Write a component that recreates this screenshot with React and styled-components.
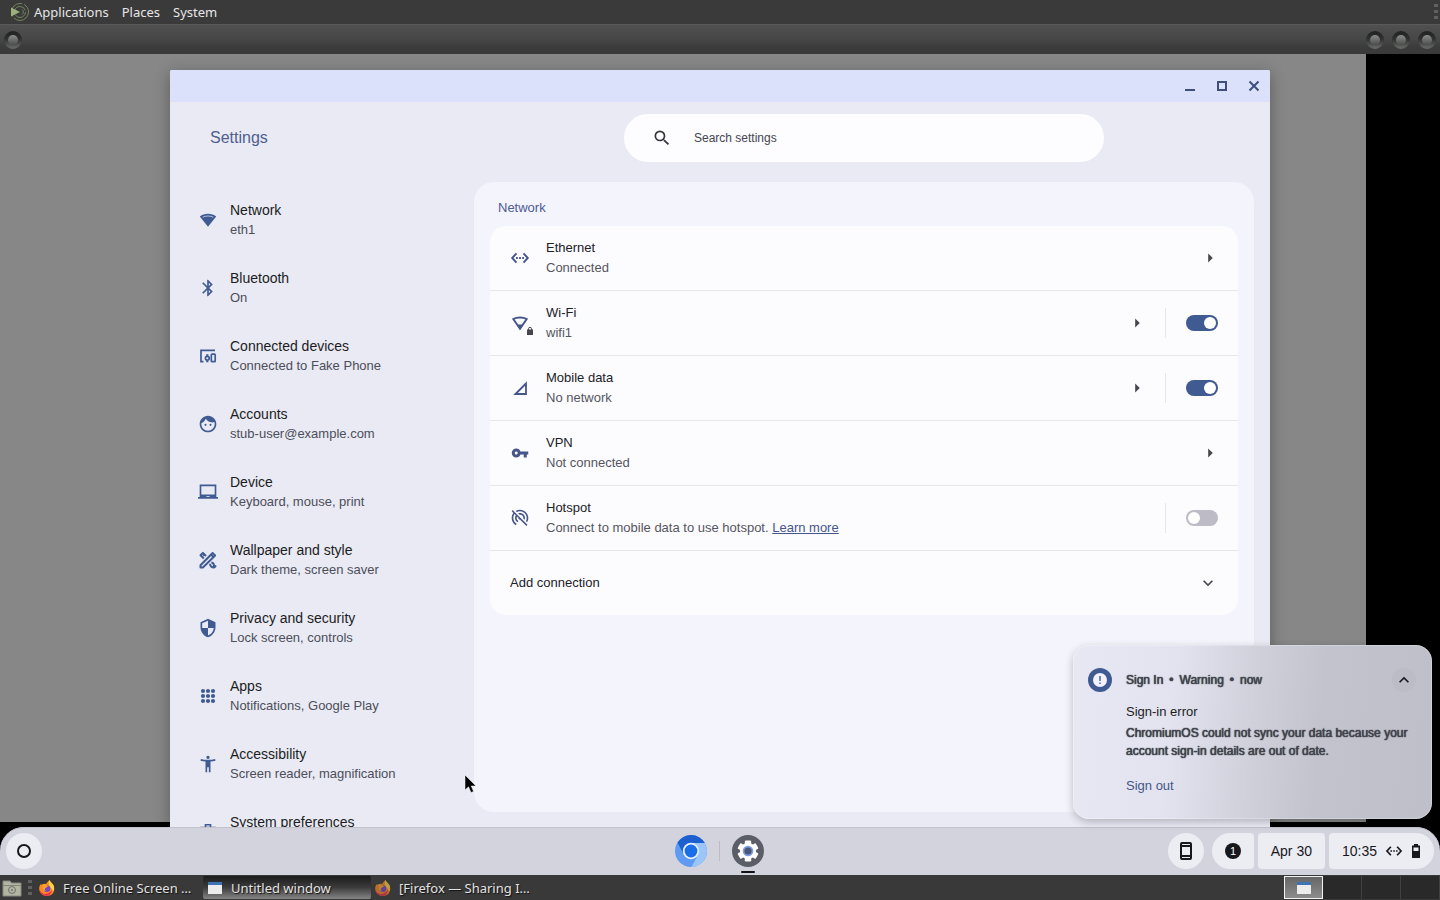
import React, { useState } from "react";
import styled, { createGlobalStyle } from "styled-components";
import {
  MdBluetooth,
  MdFace,
  MdLaptopChromebook,
  MdSecurity,
  MdAccessibilityNew,
  MdVpnKey,
  MdPortableWifiOff,
  MdSearch,
  MdArrowRight,
  MdKeyboardArrowDown,
  MdKeyboardArrowUp,
} from "react-icons/md";

const GlobalStyle = createGlobalStyle`
  * {
    box-sizing: border-box;
  }
  :root {
    --color-primary: #405a92;
    --color-text: #1b1c22;
    --color-text-soft: #4c4e59;
    --color-line: #e6e6eb;
  }
  body {
    margin: 0;
    background: #000;
    font-family: "Liberation Sans", Arial, sans-serif;
    font-size: 13px;
    line-height: 20px;
    color: var(--color-text);
  }
  button {
    border: none;
    background: none;
    padding: 0;
    font: inherit;
    color: inherit;
  }
  a {
    color: inherit;
    text-decoration: none;
  }
  svg {
    display: block;
    flex-shrink: 0;
  }
`;

const Screen = styled.div`
  height: 100vh;
  display: flex;
  flex-direction: column;
  overflow: hidden;
`;

/* ---------- host panels ---------- */

const TopPanel = styled.header`
  display: flex;
  align-items: center;
  height: 24px;
  padding: 0 2px 0 8px;
  background: #3a3a3b;
  color: #e6e6e6;
  font-family: "Noto Sans", sans-serif;
`;

const PanelMenu = styled.nav`
  display: flex;
  flex: 1;
  gap: 13px;
  margin-left: 4px;
`;

const HostTitleBar = styled.div`
  display: flex;
  align-items: center;
  justify-content: space-between;
  height: 30px;
  padding: 0 4px;
  border-top: 1px solid #5a5a5a;
  background: linear-gradient(#505051, #464647 50%, #3b3b3b 75%, #3a3a3a);
`;

const HostButtons = styled.div`
  display: flex;
  gap: 8px;
`;

const RingButton = styled.button`
  width: 18px;
  height: 18px;
  border-radius: 50%;
  border: 4px solid transparent;
  background:
    linear-gradient(#8c8c8c, #4c4c4c) padding-box,
    linear-gradient(#1f2020, #303131 45%, #6a6e6a) border-box;
`;

const Handle = styled.span`
  width: 4px;
  height: 16px;
  background: repeating-linear-gradient(#606062 0 3px, transparent 3px 6px);
`;

const BottomPanel = styled.footer`
  display: flex;
  align-items: stretch;
  height: 25px;
  background: #39393a;
  color: #e2e2e2;
  font-family: "Noto Sans", sans-serif;
`;

const PanelLauncher = styled.button`
  display: flex;
  align-items: center;
  padding: 0 6px 0 2px;
`;

const Tasks = styled.div`
  display: flex;
  flex: 1;
  align-items: center;
`;

const TaskHandle = styled(Handle)`
  margin-right: 3px;
`;

const Task = styled.button`
  display: flex;
  align-items: center;
  gap: 8px;
  width: 168px;
  height: 23px;
  padding: 0 4px;
  white-space: nowrap;
  text-shadow: 1px 1px 1px #111;
  border-radius: 2px;
  background: ${({ $active }) =>
    $active ? "linear-gradient(#1b1b1b, #3c3c3c 50%, #858585)" : "none"};

  svg {
    opacity: ${({ $dim }) => ($dim ? 0.65 : 1)};
  }
`;

const Workspaces = styled.div`
  display: grid;
  grid-template-columns: repeat(4, 39px);
  margin: 1px 0;
  background: #29292a;
`;

const Workspace = styled.button`
  display: flex;
  align-items: center;
  justify-content: center;
  border: ${({ $active }) => ($active ? "1px solid #f2f2f2" : "none")};
  border-right: 1px solid ${({ $active }) => ($active ? "#f2f2f2" : "#414142")};
  background: ${({ $active }) =>
    $active ? "linear-gradient(#666, #8c8c8c)" : "none"};
`;

/* ---------- desktop ---------- */

const Desktop = styled.main`
  position: relative;
  display: flex;
  flex-direction: column;
  flex: 1;
  min-height: 0;
  background: #000;
`;

const Wallpaper = styled.div`
  flex: 1;
  margin: 0 74px 5px 0;
  background: #878787;
`;

const SettingsWindow = styled.section`
  position: absolute;
  top: 16px;
  left: 170px;
  right: 170px;
  bottom: 48px;
  display: flex;
  flex-direction: column;
  overflow: hidden;
  border-radius: 2px 2px 0 0;
  background: #e9eaf4;
  box-shadow: 0 4px 16px rgba(0, 0, 0, 0.32);
`;

const TitleBar = styled.div`
  display: flex;
  justify-content: flex-end;
  flex-shrink: 0;
  height: 32px;
  background: #dbe1fa;
`;

const WindowButton = styled.button`
  display: flex;
  align-items: center;
  justify-content: center;
  width: 32px;
  color: #3f4f7b;
`;

const AppHeader = styled.div`
  display: grid;
  grid-template-columns: 304px 1fr;
  align-items: center;
  flex-shrink: 0;
  height: 80px;
  padding: 0 16px 8px 0;
`;

const AppTitle = styled.h1`
  margin: 0 0 0 40px;
  font-size: 16px;
  font-weight: 400;
  color: #4d5f8f;
`;

const SearchBox = styled.label`
  display: flex;
  align-items: center;
  gap: 22px;
  width: 100%;
  max-width: 480px;
  height: 48px;
  margin: 0 auto;
  padding: 0 28px;
  border-radius: 24px;
  background: #fdfcff;
  color: #33343b;

  input {
    flex: 1;
    border: none;
    outline: none;
    background: none;
    font: inherit;
    font-size: 12px;
    padding: 0;
  }
  input::placeholder {
    color: #44464f;
    opacity: 1;
  }
`;

const AppBody = styled.div`
  display: grid;
  grid-template-columns: 304px 1fr;
  flex: 1;
  min-height: 0;
  padding: 0 16px 15px 0;
`;

const SideNav = styled.nav`
  padding: 4px 0 0 28px;
  min-height: 0;
`;

const SideItem = styled.a`
  display: flex;
  align-items: center;
  gap: 12px;
  height: 68px;
  color: var(--color-primary);
`;

const SideTitle = styled.div`
  font-size: 14px;
  color: var(--color-text);
`;

const SideText = styled.div`
  min-height: 20px;
  color: var(--color-text-soft);
`;

const ContentPanel = styled.section`
  padding: 16px 16px;
  border-radius: 20px;
  background: #f4f4fd;
`;

const SectionTitle = styled.h2`
  margin: 0 8px 8px;
  font-size: 13px;
  font-weight: 400;
  color: #4c5c94;
`;

const Card = styled.div`
  border-radius: 16px;
  background: #fcfbfe;
`;

const Row = styled.div`
  display: flex;
  align-items: center;
  gap: 20px;
  height: 65px;
  padding: 0 20px;
  color: #45568a;
  border-bottom: 1px solid var(--color-line);

  &:last-child {
    height: 64px;
    border-bottom: none;
  }
`;

const RowMain = styled.div`
  display: flex;
  align-items: center;
  flex: 1;
  gap: 16px;
`;

const RowIcon = styled.span`
  display: flex;
  align-items: center;
  justify-content: center;
  width: 20px;
  height: 20px;
`;

const RowTitle = styled.div`
  color: #202126;
`;

const RowText = styled.div`
  color: #55565e;

  a {
    color: #45568a;
    text-decoration: underline;
  }
`;

const ArrowButton = styled.button`
  display: flex;
  align-items: center;
  justify-content: center;
  width: ${({ $wide }) => ($wide ? "20px" : "16px")};
  height: 16px;
  color: #46474e;
`;

const Divider = styled.span`
  width: 1px;
  height: 30px;
  background: var(--color-line);
`;

const Switch = styled.input`
  appearance: none;
  display: flex;
  align-items: center;
  width: 32px;
  height: 16px;
  margin: 0;
  padding: 0 2px;
  border-radius: 8px;
  background: #bcbbc6;

  &::before {
    content: "";
    width: 12px;
    height: 12px;
    border-radius: 50%;
    background: #fff;
  }
  &:checked {
    justify-content: flex-end;
    background: var(--color-primary);
  }
`;

/* ---------- shelf ---------- */

const Shelf = styled.div`
  position: relative;
  display: grid;
  grid-template-columns: 1fr auto 1fr;
  align-items: center;
  height: 48px;
  padding: 0 6px;
  border-radius: 24px 24px 0 0;
  background: #d3d3de;
  box-shadow: inset 0 1px 0 #c3c3cd;
`;

const ShelfApps = styled.div`
  display: flex;
  align-items: center;
  gap: 12px;
  margin-right: 2px;
`;

const ShelfApp = styled.button`
  position: relative;

  &::after {
    content: "";
    display: ${({ $running }) => ($running ? "block" : "none")};
    position: absolute;
    left: 9px;
    top: 36px;
    width: 14px;
    height: 2px;
    border-radius: 1px;
    background: #111;
  }
`;

const ShelfDivider = styled.span`
  width: 1px;
  height: 20px;
  background: #bcbcc7;
`;

const Tray = styled.div`
  display: flex;
  justify-content: flex-end;
  gap: 4px;
`;

const Pill = styled.button`
  display: flex;
  align-items: center;
  justify-content: center;
  gap: 8px;
  height: 36px;
  padding: 0 13px;
  border-radius: ${({ $shape }) => $shape || "4px"};
  background: #ececf3;
  font-size: 14px;
  color: #17181c;
`;

const RoundPill = styled(Pill)`
  width: 36px;
  padding: 0;
  border-radius: 50%;
  margin-right: ${({ $spaced }) => ($spaced ? "4px" : "0")};
`;

/* ---------- notification ---------- */

const Notification = styled.aside`
  position: absolute;
  right: 8px;
  bottom: 56px;
  display: grid;
  grid-template-columns: 24px 1fr;
  column-gap: 14px;
  width: 359px;
  padding: 23px 16px 23px 15px;
  border-radius: 16px;
  background: linear-gradient(
    95deg,
    #e7e8f3 0%,
    #e2e3ee 28%,
    #cfd0da 50%,
    #c3c3cd 68%,
    #bfbfca 100%
  );
  box-shadow:
    inset 0 0 0 1px rgba(255, 255, 255, 0.25),
    0 3px 8px rgba(0, 0, 0, 0.24);
`;

const NoticeHead = styled.div`
  display: flex;
  align-items: center;
  justify-content: space-between;
  height: 24px;
  font-size: 12px;
  color: #41434c;
  text-shadow: 0 0 1px #41434c, 0 0 1px #41434c;
`;

const NoticeMeta = styled.div`
  display: flex;
  gap: 6px;
`;

const CollapseButton = styled.button`
  display: flex;
  align-items: center;
  justify-content: center;
  width: 24px;
  height: 24px;
  border-radius: 50%;
  background: #bcbcc6;
  color: #17181c;
`;

const NoticeTitle = styled.div`
  margin-top: 10px;
`;

const NoticeText = styled.p`
  margin: 2px 0 16px;
  font-size: 12px;
  line-height: 18px;
  color: #41434c;
  text-shadow: 0 0 1px #41434c, 0 0 1px #41434c;
`;

const NoticeAction = styled.button`
  display: block;
  color: #45568a;
`;

const Pointer = styled.svg`
  position: absolute;
  left: 464px;
  top: 720px;
`;

/* ---------- drawings ---------- */

const WifiIcon = () => (
  <svg width="20" height="20" viewBox="0 0 20 20" fill="currentColor">
    <path d="M10 3.800C6.900 3.800 4.100 4.800 1.800 6.500L10 16.700L18.200 6.500C15.900 4.800 13.100 3.800 10 3.800Z" />
    <path d="M4.800 7.200C6.300 6.400 8 6 10 6s3.700.4 5.200 1.200" fill="none" stroke="#e9eaf4" strokeWidth="0.700" />
  </svg>
);

const EthernetIcon = ({ size = 20 }) => (
  <svg width={size} height={size} viewBox="0 0 20 20" fill="none" stroke="currentColor" strokeWidth="1.900">
    <path d="M6.500 5.300L2.200 10l4.300 4.700M13.500 5.300l4.300 4.700-4.300 4.700" />
    <path d="M6 10h1.800M9.100 10h1.800M12.200 10H14" />
  </svg>
);

const DevicesIcon = () => (
  <svg width="20" height="20" viewBox="0 0 20 20" fill="none" stroke="currentColor" strokeWidth="1.700">
    <path d="M17 4.300H3v11.400h2.500" />
    <rect x="13.300" y="8.200" width="3.900" height="7.500" rx="0.800" />
    <circle cx="9.300" cy="12.200" r="1.900" />
    <path d="M8.200 9.200h2.200M8.200 15.400h2.200" />
  </svg>
);

const StyleIcon = () => (
  <svg width="20" height="20" viewBox="0 0 20 20" fill="none" stroke="currentColor" strokeWidth="2" strokeLinejoin="round">
    <path d="M2.500 17.500v-2.300L14.600 3l2.500 2.500L4.900 17.500Z" />
    <path d="M13 4.600l2.500 2.500" />
    <path d="M8 6L4.900 2.900 2.500 5.300l3.300 3.100M5.200 5.800l1.400-1.400" />
    <path d="M12 13.800c.1 2.200 1.500 3.800 4.300 3.600l1.200-1.200-1.600-.5c.2-2-.7-2.900-2.500-3.200" />
  </svg>
);

const AppsIcon = () => (
  <svg width="20" height="20" viewBox="0 0 20 20" fill="currentColor">
    {[5, 10, 15].map((y) =>
      [5, 10, 15].map((x) => <circle key={x + "-" + y} cx={x} cy={y} r="2.100" />)
    )}
  </svg>
);

const SystemIcon = () => (
  <svg width="20" height="20" viewBox="0 0 20 20" fill="none" stroke="currentColor" strokeWidth="1.600">
    <path d="M7.500 5.500V2.800h5v2.700M3 5.500h14v11H3z" />
  </svg>
);

const WifiLockIcon = () => (
  <svg width="20" height="20" viewBox="0 0 20 20" overflow="visible">
    <path d="M10 15.800L3.300 6C5.200 4.900 7.500 4.500 10 4.500s4.800.4 6.700 1.500Z" fill="none" stroke="currentColor" strokeWidth="1.900" />
    <path d="M6.800 11.500h6.400L10 16Z" fill="currentColor" />
    <path d="M17 16.500h6V22h-6z" fill="#46474e" />
    <path d="M18.500 17v-1.200a1.500 1.500 0 0 1 3 0V17" fill="none" stroke="#46474e" />
  </svg>
);

const SignalIcon = () => (
  <svg width="20" height="20" viewBox="0 0 20 20" fill="none" stroke="currentColor" strokeWidth="1.800">
    <path d="M5.500 16L16 5.500V16Z" />
  </svg>
);

const MenuLogo = () => (
  <svg width="22" height="20" viewBox="0 0 22 20" fill="none">
    <circle cx="12" cy="10" r="8.500" stroke="#75845c" strokeDasharray="20 2" />
    <circle cx="12" cy="10" r="5.500" stroke="#75845c" strokeDasharray="14 4" />
    <path d="M3 5.500L12 10l-9 4.500Z" fill="#9bb07a" />
    <path d="M14 7.500a3 3 0 0 1 0 5" stroke="#75845c" />
  </svg>
);

const ChromiumIcon = () => (
  <svg width="32" height="32" viewBox="0 0 32 32">
    <circle cx="16" cy="16" r="16" fill="#5f9bf3" />
    <path d="M2.500 7.500A16 16 0 0 1 29.800 8H16a8 8 0 0 0-7.200 11.500Z" fill="#1e5fd0" />
    <path d="M29.800 8A16 16 0 0 1 16.500 32l6.500-12a8 8 0 0 0-7-12Z" fill="#9cc6fb" />
    <circle cx="16" cy="16" r="8.200" fill="#e8f1fd" />
    <circle cx="16" cy="16" r="6.400" fill="#1a6fe8" />
  </svg>
);

const GearIcon = () => (
  <svg width="32" height="32" viewBox="0 0 32 32">
    <circle cx="16" cy="16" r="16" fill="#5b5e66" />
    <g fill="#fff">
      {[0, 60, 120].map((a) => (
        <rect key={a} x="12.800" y="5.500" width="6.400" height="21" rx="1.200" transform={`rotate(${a} 16 16)`} />
      ))}
      <circle cx="16" cy="16" r="8" />
    </g>
    <circle cx="16" cy="16" r="5.300" fill="#7d9de6" />
    <circle cx="16" cy="16" r="3.600" fill="#4b5777" />
  </svg>
);

const PhoneIcon = () => (
  <svg width="20" height="20" viewBox="0 0 20 20" fill="none" stroke="currentColor" strokeWidth="2">
    <rect x="5" y="2" width="10" height="16" rx="1" />
    <path d="M5 5h10M5 15h10" />
  </svg>
);

const BatteryIcon = () => (
  <svg width="10" height="16" viewBox="0 0 10 16">
    <path d="M3 1h4v1.500h2V15H1V2.500h2Z" fill="currentColor" />
    <path d="M2.500 4.500h5v3.500h-5z" fill="#ececf3" />
  </svg>
);

const FolderIcon = () => (
  <svg width="20" height="18" viewBox="0 0 20 18">
    <path d="M1 2h7l1.500 2H19v13H1Z" fill="#b3b5a4" stroke="#85877a" />
    <path d="M1 6.500h18" stroke="#85877a" />
    <circle cx="10" cy="11" r="3.500" fill="none" stroke="#6f7167" />
    <circle cx="10" cy="11" r="1" fill="#6f7167" />
  </svg>
);

const FirefoxIcon = () => (
  <svg width="16" height="16" viewBox="0 0 16 16">
    <path d="M10.500 0c.5 2 2.700 3 4 5.200 2 4.300.3 10.600-6.500 10.800C3.500 16 .2 12.800.2 8.800c0-2 .6-3.600 1.700-4.800l.8 1.100C4 4 5.600 3.600 7 4c1-1.200 2-2.700 3.500-4Z" fill="#ff8a1e" />
    <path d="M10.500 0c.5 2 2.700 3 4 5.200.8 2 .8 4-.2 6L10 5c-.5-1.800-.3-3.500.5-5Z" fill="#ffd545" />
    <path d="M.3 8C1 13 5 15 8.500 13.500c2-.7 3.500-2 4.500-3.500-.5 4-3 6-5.600 6C3.500 15.800.3 13 .3 8Z" fill="#ee3150" />
    <circle cx="8" cy="8.700" r="3.300" fill="#7747c9" />
    <path d="M2.500 5C4 4 5.600 3.800 7.300 5.300L9 6.600 6.400 8c-.9 1-.5 2.400.6 3C4.500 11 3.500 8.600 4.300 7Z" fill="#ffa52c" />
  </svg>
);

const WindowIcon = () => (
  <svg width="16" height="16" viewBox="0 0 16 16">
    <path d="M1 2h14v12H1z" fill="#ececec" />
    <path d="M1 2h14v3H1z" fill="#3d74b4" />
  </svg>
);

/* ---------- data ---------- */

const menus = ["Applications", "Places", "System"];

const sections = [
  { title: "Network", text: "eth1", icon: <WifiIcon /> },
  { title: "Bluetooth", text: "On", icon: <MdBluetooth size={20} /> },
  { title: "Connected devices", text: "Connected to Fake Phone", icon: <DevicesIcon /> },
  { title: "Accounts", text: "stub-user@example.com", icon: <MdFace size={20} /> },
  { title: "Device", text: "Keyboard, mouse, print", icon: <MdLaptopChromebook size={20} /> },
  { title: "Wallpaper and style", text: "Dark theme, screen saver", icon: <StyleIcon /> },
  { title: "Privacy and security", text: "Lock screen, controls", icon: <MdSecurity size={20} /> },
  { title: "Apps", text: "Notifications, Google Play", icon: <AppsIcon /> },
  { title: "Accessibility", text: "Screen reader, magnification", icon: <MdAccessibilityNew size={20} /> },
  { title: "System preferences", text: "", icon: <SystemIcon /> },
];

const connections = [
  { name: "Ethernet", text: "Connected", icon: <EthernetIcon />, arrow: true },
  { name: "Wi-Fi", text: "wifi1", icon: <WifiLockIcon />, arrow: true, toggle: true },
  { name: "Mobile data", text: "No network", icon: <SignalIcon />, arrow: true, toggle: true },
  { name: "VPN", text: "Not connected", icon: <MdVpnKey size={18} />, arrow: true },
  {
    name: "Hotspot",
    text: "Connect to mobile data to use hotspot. ",
    link: "Learn more",
    icon: <MdPortableWifiOff size={20} />,
    toggle: true,
  },
];

const ConnectionRow = ({ item, checked, onToggle }) => (
  <Row>
    <RowMain>
      <RowIcon>{item.icon}</RowIcon>
      <div>
        <RowTitle>{item.name}</RowTitle>
        <RowText>
          {item.text}
          {item.link && <a href="#hotspot">{item.link}</a>}
        </RowText>
      </div>
    </RowMain>
    {item.arrow && (
      <ArrowButton aria-label={item.name}>
        <MdArrowRight size={22} />
      </ArrowButton>
    )}
    {item.toggle && (
      <>
        <Divider />
        <Switch type="checkbox" aria-label={item.name} checked={checked} onChange={onToggle} />
      </>
    )}
  </Row>
);

const App = () => {
  const [enabled, setEnabled] = useState({ "Wi-Fi": true, "Mobile data": true });
  const [search, setSearch] = useState("");

  const handleToggle = (name) => {
    setEnabled({ ...enabled, [name]: !enabled[name] });
  };

  return (
    <Screen>
      <GlobalStyle />
      <TopPanel>
        <MenuLogo />
        <PanelMenu>
          {menus.map((menu) => (
            <button key={menu}>{menu}</button>
          ))}
        </PanelMenu>
        <Handle />
      </TopPanel>
      <HostTitleBar>
        <RingButton aria-label="Menu" />
        <HostButtons>
          <RingButton aria-label="Minimize" />
          <RingButton aria-label="Maximize" />
          <RingButton aria-label="Close" />
        </HostButtons>
      </HostTitleBar>

      <Desktop>
        <Wallpaper />
        <SettingsWindow>
          <TitleBar>
            <WindowButton aria-label="Minimize">
              <svg width="16" height="16" fill="currentColor">
                <path d="M3 11h10v2H3z" />
              </svg>
            </WindowButton>
            <WindowButton aria-label="Maximize">
              <svg width="16" height="16" fill="none" stroke="currentColor" strokeWidth="2">
                <path d="M4 4h8v8H4z" />
              </svg>
            </WindowButton>
            <WindowButton aria-label="Close">
              <svg width="16" height="16" fill="none" stroke="currentColor" strokeWidth="2">
                <path d="M3.500 3.500l9 9M12.500 3.500l-9 9" />
              </svg>
            </WindowButton>
          </TitleBar>
          <AppHeader>
            <AppTitle>Settings</AppTitle>
            <SearchBox>
              <MdSearch size={20} />
              <input
                aria-label="Search settings"
                placeholder="Search settings"
                value={search}
                onChange={(e) => setSearch(e.target.value)}
              />
            </SearchBox>
          </AppHeader>
          <AppBody>
            <SideNav>
              {sections.map((section) => (
                <SideItem key={section.title} href="#section">
                  {section.icon}
                  <div>
                    <SideTitle>{section.title}</SideTitle>
                    <SideText>{section.text}</SideText>
                  </div>
                </SideItem>
              ))}
            </SideNav>
            <ContentPanel>
              <SectionTitle>Network</SectionTitle>
              <Card>
                {connections.map((item) => (
                  <ConnectionRow
                    key={item.name}
                    item={item}
                    checked={!!enabled[item.name]}
                    onToggle={() => handleToggle(item.name)}
                  />
                ))}
                <Row>
                  <RowMain>
                    <RowTitle>Add connection</RowTitle>
                  </RowMain>
                  <ArrowButton $wide aria-label="Add connection">
                    <MdKeyboardArrowDown size={20} />
                  </ArrowButton>
                </Row>
              </Card>
            </ContentPanel>
          </AppBody>
        </SettingsWindow>

        <Shelf>
          <RoundPill aria-label="Launcher">
            <svg width="16" height="16" fill="none" stroke="currentColor" strokeWidth="2">
              <circle cx="8" cy="8" r="6" />
            </svg>
          </RoundPill>
          <ShelfApps>
            <ShelfApp aria-label="Chromium">
              <ChromiumIcon />
            </ShelfApp>
            <ShelfDivider />
            <ShelfApp aria-label="Settings" $running>
              <GearIcon />
            </ShelfApp>
          </ShelfApps>
          <Tray>
            <RoundPill aria-label="Phone Hub" $spaced>
              <PhoneIcon />
            </RoundPill>
            <Pill aria-label="Notifications" $shape="18px 4px 4px 18px">
              <svg width="16" height="16">
                <circle cx="8" cy="8" r="8" fill="currentColor" />
                <text x="8" y="12" fill="#fff" fontSize="11" textAnchor="middle">1</text>
              </svg>
            </Pill>
            <Pill>Apr 30</Pill>
            <Pill $shape="4px 18px 18px 4px">
              10:35
              <EthernetIcon size={18} />
              <BatteryIcon />
            </Pill>
          </Tray>
        </Shelf>

        <Notification>
          <svg width="24" height="24" viewBox="0 0 24 24">
            <circle cx="12" cy="12" r="12" fill="#405a92" />
            <circle cx="12" cy="12" r="7" fill="#f2f3fa" />
            <path d="M12 8v5M12 14.500v1.500" stroke="#405a92" strokeWidth="1.400" />
          </svg>
          <div>
            <NoticeHead>
              <NoticeMeta>
                <span>Sign In</span>
                <span>•</span>
                <span>Warning</span>
                <span>•</span>
                <span>now</span>
              </NoticeMeta>
              <CollapseButton aria-label="Collapse">
                <MdKeyboardArrowUp size={20} />
              </CollapseButton>
            </NoticeHead>
            <NoticeTitle>Sign-in error</NoticeTitle>
            <NoticeText>
              ChromiumOS could not sync your data because your account sign-in details are out of date.
            </NoticeText>
            <NoticeAction>Sign out</NoticeAction>
          </div>
        </Notification>

        <Pointer width="14" height="20" viewBox="0 0 14 20">
          <path d="M1 1v15l3.500-3.200L7 18.500l2.600-1.100L7.200 12H12Z" fill="#000" stroke="#fff" strokeWidth="0.500" />
        </Pointer>
      </Desktop>

      <BottomPanel>
        <PanelLauncher aria-label="Screenshots">
          <FolderIcon />
        </PanelLauncher>
        <Tasks>
          <TaskHandle />
          <Task>
            <FirefoxIcon />
            Free Online Screen …
          </Task>
          <Task $active>
            <WindowIcon />
            Untitled window
          </Task>
          <Task $dim>
            <FirefoxIcon />
            [Firefox — Sharing I…
          </Task>
        </Tasks>
        <Workspaces>
          <Workspace $active aria-label="Workspace 1">
            <WindowIcon />
          </Workspace>
          <Workspace aria-label="Workspace 2" />
          <Workspace aria-label="Workspace 3" />
          <Workspace aria-label="Workspace 4" />
        </Workspaces>
      </BottomPanel>
    </Screen>
  );
};

export default App;
